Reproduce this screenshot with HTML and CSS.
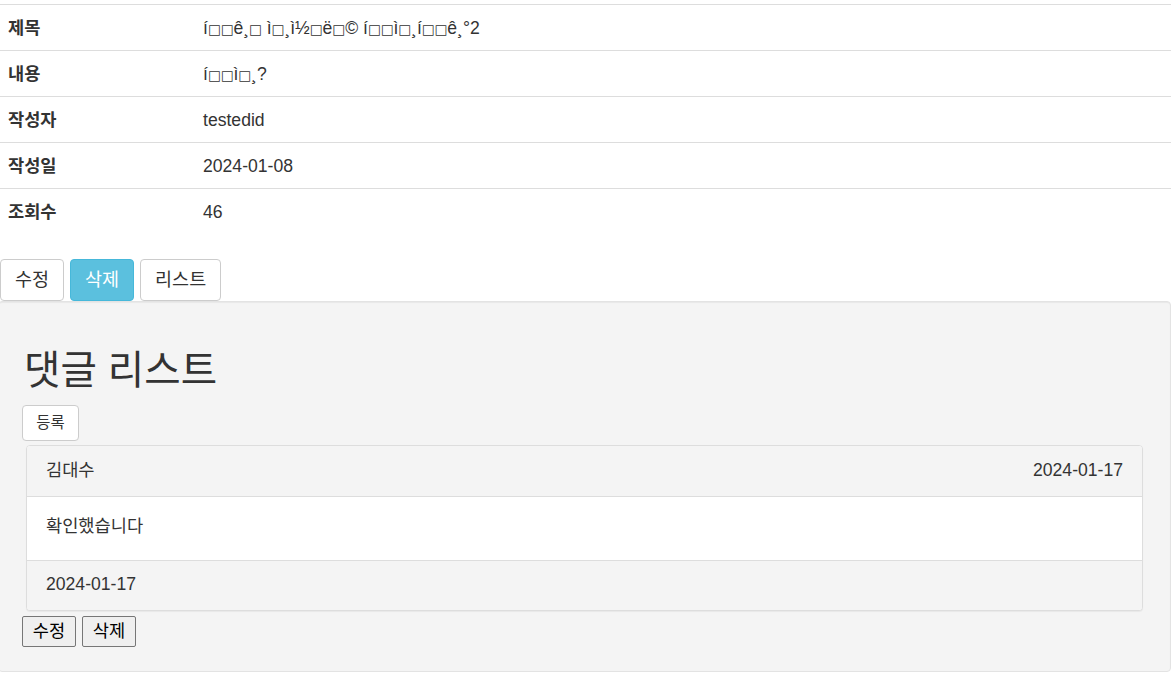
FILE: index.html
```html
<!DOCTYPE html>
<html lang="ko">
<head>
<meta charset="utf-8">
<title>게시글 상세</title>
<link rel="stylesheet" href="styles.css">
</head>
<body>
<table class="detail">
  <tr><th>제목</th><td>í<span class="tofu">□□</span>ê¸<span class="tofu">□</span> ì<span class="tofu">□</span>¸ì½<span class="tofu">□</span>ë<span class="tofu">□</span>© í<span class="tofu">□□</span>ì<span class="tofu">□</span>¸í<span class="tofu">□□</span>ê¸°2</td></tr>
  <tr><th>내용</th><td>í<span class="tofu">□□</span>ì<span class="tofu">□</span>¸?</td></tr>
  <tr><th>작성자</th><td>testedid</td></tr>
  <tr><th>작성일</th><td>2024-01-08</td></tr>
  <tr><th>조회수</th><td>46</td></tr>
</table>
<div class="actions">
  <button class="btn">수정</button>
  <button class="btn btn-info">삭제</button>
  <button class="btn">리스트</button>
</div>
<section class="well">
  <h1 class="title">댓글 리스트</h1>
  <button class="btn btn-sm">등록</button>
  <div class="panel">
    <div class="panel-heading"><span>김대수</span><span>2024-01-17</span></div>
    <div class="panel-body">확인했습니다</div>
    <div class="panel-footer">2024-01-17</div>
  </div>
  <div class="reply-actions">
    <button class="native">수정</button>
    <button class="native">삭제</button>
  </div>
</section>
</body>
</html>
```
FILE: styles.css
```css
html, body {
  margin: 0;
  padding: 0;
  background: #fff;
}
body {
  font-family: "Liberation Sans", Arial, "Noto Sans CJK KR", sans-serif;
  font-size: 17.6px;
  color: #333;
  width: 1171px;
  overflow: hidden;
}
.detail {
  width: 100%;
  border-collapse: collapse;
  margin-top: 4px;
}
.detail th,
.detail td {
  border-top: 1px solid #ddd;
  padding: 0 8px;
  height: 46px;
  line-height: 20px;
  text-align: left;
  vertical-align: middle;
  box-sizing: border-box;
}
.detail th {
  width: 195px;
  font-weight: bold;
}
.tofu {
  font-family: "DejaVu Sans", sans-serif;
  font-size: 13.5px;
  line-height: 10px;
}
.actions {
  display: flex;
  gap: 6px;
  margin-top: 24px;
}
.btn {
  font-family: inherit;
  font-size: 18.5px;
  color: #333;
  background: #fff;
  border: 1px solid #ccc;
  border-radius: 4px;
  height: 42px;
  padding: 0 14px;
  line-height: 40px;
}
.btn-info {
  background: #5bc0de;
  border-color: #46b8da;
  color: #fff;
}
.well {
  background: #f4f4f4;
  border: 1px solid #e3e3e3;
  border-radius: 4px;
  box-shadow: inset 0 1px 1px rgba(0,0,0,.05);
  height: 369px;
  margin-left: -2px;
  padding: 0 27px 0 23px;
  box-sizing: content-box;
  width: calc(1171px - 50px);
}
.title {
  font-weight: 400;
  font-size: 39.6px;
  line-height: 44px;
  margin: 46px 0 13px 2px;
}
.btn-sm {
  display: block;
  height: 36px;
  width: 57px;
  padding: 0;
  font-size: 15.4px;
  line-height: 34px;
}
.panel {
  margin: 4px 0 0 4px;
  background: #fff;
  border: 1px solid #ddd;
  border-radius: 4px;
  box-shadow: 0 1px 1px rgba(0,0,0,.05);
  width: 1115px;
}
.panel-heading {
  display: flex;
  justify-content: space-between;
  background: #f4f4f4;
  border-bottom: 1px solid #ddd;
  border-radius: 3px 3px 0 0;
  padding: 0 19px;
  height: 50px;
  line-height: 48px;
}
.panel-body {
  padding: 0 19px;
  height: 63px;
  line-height: 58px;
}
.panel-footer {
  background: #f4f4f4;
  border-top: 1px solid #ddd;
  border-radius: 0 0 3px 3px;
  padding: 0 19px;
  height: 49px;
  line-height: 47px;
}
.reply-actions {
  display: flex;
  gap: 6px;
  margin-top: 5px;
}
.native {
  font-family: inherit;
  font-size: 17.6px;
  color: #000;
  background: #efefef;
  border: 1px solid #767676;
  border-radius: 2px;
  height: 31px;
  width: 54px;
  padding: 0;
  line-height: 29px;
}
```
